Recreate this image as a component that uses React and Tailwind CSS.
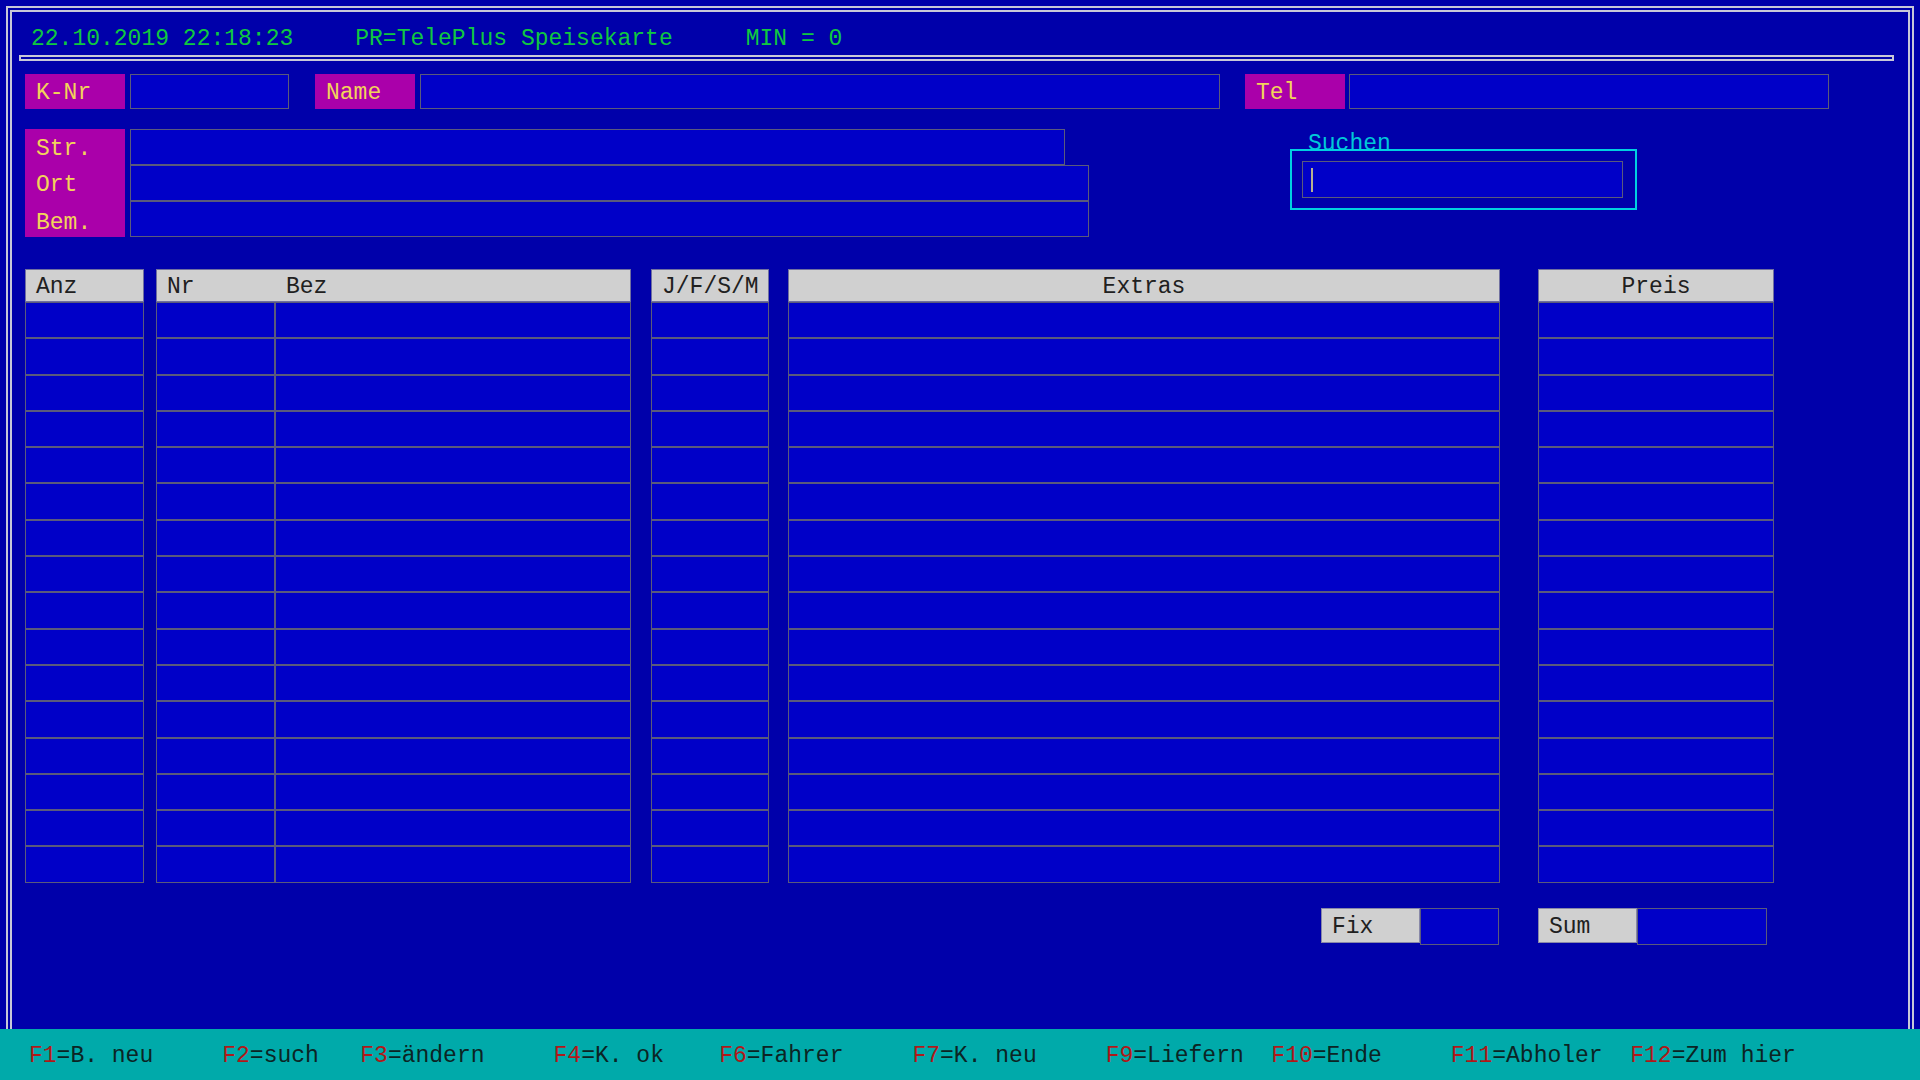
import React from 'react';

const FONT = { fontFamily: '"Liberation Mono", "Courier New", monospace' };

const ROWS = 16;

const statusKeys = [
    { key: 'F1', text: '=B. neu', pad: 5 },
    { key: 'F2', text: '=such', pad: 3 },
    { key: 'F3', text: '=ändern', pad: 5 },
    { key: 'F4', text: '=K. ok', pad: 4 },
    { key: 'F6', text: '=Fahrer', pad: 5 },
    { key: 'F7', text: '=K. neu', pad: 5 },
    { key: 'F9', text: '=Liefern', pad: 2 },
    { key: 'F10', text: '=Ende', pad: 5 },
    { key: 'F11', text: '=Abholer', pad: 2 },
    { key: 'F12', text: '=Zum hier', pad: 0 },
];

// magenta caption box used in the customer form
const Label = ({ children, className = '' }) => (
    <div className={`bg-[#aa00aa] text-[#f2d35a] flex items-center pl-[11px] pt-[4px] ${className}`}>{children}</div>
);

// plain blue entry field
const Field = ({ className = '' }) => (
    <div className={`bg-[#0000c8] border border-[#5a5a7c] ${className}`}></div>
);

const HeadCell = ({ children, className = '' }) => (
    <div className={`h-[33px] bg-[#d0d0d0] border border-[#7070a0] text-[#202020] flex items-center pt-[4px] ${className}`}>{children}</div>
);

const Column = ({ width, title, align = 'left' }) => (
    <div className={`flex flex-col ${width}`}>
        <HeadCell className={align === 'center' ? 'justify-center' : 'pl-[10px]'}>{title}</HeadCell>
        {Array.from({ length: ROWS }).map((_, i) => (
            <Field key={i} className="h-[36.3px]" />
        ))}
    </div>
);

export default function App() {
    return (
        <div className="w-[1920px] h-[1080px] bg-[#0000aa] flex flex-col overflow-hidden text-[23px] leading-none" style={FONT}>
            {/* main screen with double frame */}
            <div className="h-[1029px] pt-[6px] px-[6px]">
                <div className="h-full border-2 border-b-0 border-[#c8c8d8] pt-[2px] px-[2px]">
                    <div className="h-full border-2 border-b-0 border-[#c8c8d8]">
                        {/* title line */}
                        <div className="h-[43px] flex items-center pt-[11px] pl-[19px] text-[#10c840] whitespace-pre">
                            <span>22.10.2019 22:18:23</span>
                            <span className="ml-[62px]">PR=TelePlus Speisekarte</span>
                            <span className="ml-[73px]">MIN = 0</span>
                        </div>
                        <div className="ml-[7px] w-[1875px] h-[6px] border-2 border-[#c8c8d8]"></div>

                        {/* customer number / name / phone */}
                        <div className="flex mt-[13px] ml-[13px] h-[35px]">
                            <Label className="w-[100px]">K-Nr</Label>
                            <Field className="ml-[5px] w-[159px]" />
                            <Label className="ml-[26px] w-[100px]">Name</Label>
                            <Field className="ml-[5px] w-[800px]" />
                            <Label className="ml-[25px] w-[100px]">Tel</Label>
                            <Field className="ml-[4px] w-[480px]" />
                        </div>

                        {/* address block + search */}
                        <div className="flex mt-[20px] ml-[13px]">
                            <div className="w-[100px] h-[108px] bg-[#aa00aa] text-[#f2d35a] flex flex-col pl-[11px] pt-[2px]">
                                <div className="h-[37px] flex items-center">Str.</div>
                                <div className="h-[37px] flex items-center">Ort</div>
                                <div className="h-[34px] flex items-start pt-[8px]">Bem.</div>
                            </div>
                            <div className="ml-[5px] flex flex-col">
                                <Field className="w-[935px] h-[36px]" />
                                <Field className="w-[959px] h-[36px]" />
                                <Field className="w-[959px] h-[36px]" />
                            </div>
                            <div className="ml-[201px] flex flex-col">
                                <div className="h-[20px] pl-[18px] text-[#00c8d8] leading-[30px]">Suchen</div>
                                <div className="w-[347px] h-[61px] border-2 border-[#00d0e0] p-[10px]">
                                    <div className="w-[321px] h-[37px] bg-[#0000c8] border border-[#5a5a7c] flex items-center pl-[8px]">
                                        <div className="w-[2px] h-[24px] bg-[#b8b090]"></div>
                                    </div>
                                </div>
                            </div>
                        </div>

                        {/* order lines */}
                        <div className="flex mt-[32px] ml-[13px]">
                            <Column width="w-[119px]" title="Anz" />
                            <div className="ml-[12px] w-[475px] flex flex-col">
                                <HeadCell className="pl-[10px]">
                                    <span className="w-[119px]">Nr</span>
                                    <span>Bez</span>
                                </HeadCell>
                                {Array.from({ length: ROWS }).map((_, i) => (
                                    <div key={i} className="flex h-[36.3px]">
                                        <Field className="w-[119px] h-full" />
                                        <Field className="flex-1 h-full" />
                                    </div>
                                ))}
                            </div>
                            <Column width="ml-[20px] w-[118px]" title="J/F/S/M" />
                            <Column width="ml-[19px] w-[712px]" title="Extras" align="center" />
                            <Column width="ml-[38px] w-[236px]" title="Preis" align="center" />
                        </div>

                        {/* totals */}
                        <div className="flex mt-[25px] ml-[1309px]">
                            <div className="w-[99px] h-[35px] bg-[#d0d0d0] border border-[#8888a8] text-[#202020] flex items-center pl-[10px] pt-[4px]">Fix</div>
                            <Field className="w-[79px] h-[37px]" />
                            <div className="ml-[39px] w-[99px] h-[35px] bg-[#d0d0d0] border border-[#8888a8] text-[#202020] flex items-center pl-[10px] pt-[4px]">Sum</div>
                            <Field className="w-[130px] h-[37px]" />
                        </div>
                    </div>
                </div>
            </div>

            {/* function key line */}
            <div className="h-[51px] bg-[#00aaaa] flex items-center pl-[29px] pt-[3px] whitespace-pre text-[#0c2424]">
                {statusKeys.map((k) => (
                    <span key={k.key}>
                        <span className="text-[#b01818]">{k.key}</span>
                        {k.text}
                        {' '.repeat(k.pad)}
                    </span>
                ))}
            </div>
        </div>
    );
}
